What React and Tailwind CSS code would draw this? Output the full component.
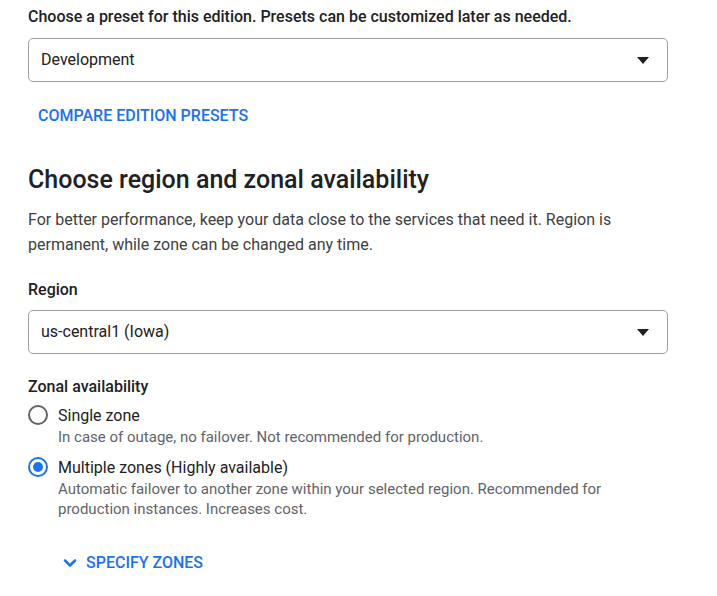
import { ChevronDown } from 'lucide-react';

function Select({ value }) {
  return (
    <div className="flex h-[44px] w-[640px] items-center justify-between rounded-[5px] border border-[#9aa0a6] pl-[12px] pr-[18px]">
      <span className="text-[16px] text-[#202124]">{value}</span>
      <svg width="12" height="7" viewBox="0 0 12 7">
        <path d="M0 0 L12 0 L6 7 Z" fill="#202124" />
      </svg>
    </div>
  );
}

function Radio({ checked, label, desc }) {
  return (
    <div className="flex gap-[10px]">
      <div className="pt-[1px]">
        {checked ? (
          <div className="flex h-[20px] w-[20px] items-center justify-center rounded-full border-2 border-[#1a73e8]">
            <div className="h-[10px] w-[10px] rounded-full bg-[#1a73e8]" />
          </div>
        ) : (
          <div className="h-[20px] w-[20px] rounded-full border-2 border-[#5f6368]" />
        )}
      </div>
      <div>
        <div className="text-[16px] leading-[23px] text-[#202124]">{label}</div>
        <div className="text-[15px] leading-[20px] text-[#5f6368]">{desc}</div>
      </div>
    </div>
  );
}

export default function App() {
  return (
    <div className="min-h-[596px] bg-white px-[28px] pt-[6px] font-['Roboto',sans-serif]">
      <p className="text-[16px] font-medium leading-[22px] text-[#202124]">
        Choose a preset for this edition. Presets can be customized later as needed.
      </p>
      <div className="mt-[10px]">
        <Select value="Development" />
      </div>
      <div className="mt-[23px] pl-[10px] text-[16px] font-medium leading-[22px] text-[#1a73e8]">
        COMPARE EDITION PRESETS
      </div>

      <h2 className="mt-[37px] text-[25px] font-medium leading-[32px] text-[#202124]">
        Choose region and zonal availability
      </h2>
      <p className="mt-[11px] w-[640px] text-[16px] leading-[25px] text-[#3c4043]">
        For better performance, keep your data close to the services that need it. Region is permanent, while zone can be changed any time.
      </p>

      <div className="mt-[22px] text-[16px] font-medium leading-[22px] text-[#202124]">Region</div>
      <div className="mt-[9px]">
        <Select value="us-central1 (Iowa)" />
      </div>

      <div className="mt-[22px] text-[16px] font-medium leading-[22px] text-[#202124]">Zonal availability</div>
      <div className="mt-[6px] flex flex-col gap-[9px]">
        <Radio
          label="Single zone"
          desc="In case of outage, no failover. Not recommended for production."
        />
        <Radio
          checked
          label="Multiple zones (Highly available)"
          desc={
            <span className="block w-[560px]">
              Automatic failover to another zone within your selected region. Recommended for production instances. Increases cost.
            </span>
          }
        />
      </div>

      <div className="mt-[32px] flex items-center gap-[6px] pl-[32px] text-[16px] font-medium text-[#1a73e8]">
        <ChevronDown className="h-[20px] w-[20px]" strokeWidth={3} />
        <span>SPECIFY ZONES</span>
      </div>
    </div>
  );
}
